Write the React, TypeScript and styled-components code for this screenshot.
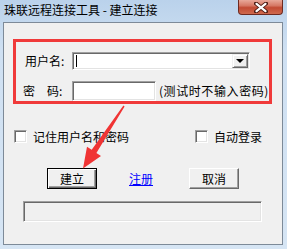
import React from 'react'
import styled, {createGlobalStyle} from 'styled-components'

const GlobalStyle = createGlobalStyle`
  html, body {
    margin: 0;
    padding: 0;
    background: #c8dbef;
  }
  body {
    font-family: 'Noto Sans CJK SC', 'Noto Sans', sans-serif;
    font-size: 12px;
    color: #000;
  }
`

const Window = styled.div`
  position: relative;
  width: 287px;
  height: 249px;
  box-sizing: border-box;
  padding: 0 4px 4px 3px;
  display: flex;
  flex-direction: column;
  background: linear-gradient(180deg, #bad2eb 0%, #cfe0f2 20%, #d6e5f4 100%);
  overflow: hidden;
`

const TitleBar = styled.div`
  height: 22px;
  display: flex;
  align-items: flex-start;
  justify-content: space-between;
`

const TitleText = styled.span`
  margin: 3px 0 0 1px;
  font-size: 12px;
  line-height: 14px;
  white-space: nowrap;
`

const CloseButton = styled.div`
  width: 45px;
  height: 15px;
  box-sizing: border-box;
  border: 1px solid #6e2a20;
  border-top: none;
  border-radius: 0 0 4px 4px;
  background: linear-gradient(180deg, #e8a899 0%, #d67865 40%, #c24a33 55%, #cf6a4e 100%);
  display: flex;
  align-items: center;
  justify-content: center;
`

const Client = styled.div`
  flex: 1;
  background: #f0f0f0;
  border: 1px solid #7d8a98;
  display: flex;
  flex-direction: column;
`

const RedBox = styled.div`
  margin: 16px 0 0 9px;
  width: 259px;
  height: 65px;
  box-sizing: border-box;
  border: 3px solid #f03a3a;
  padding: 10px 0 0 0;
  display: flex;
  flex-direction: column;
  gap: 11px;
`

const FieldRow = styled.div<{$h: number}>`
  display: flex;
  align-items: center;
  height: ${p => p.$h}px;
  padding-left: ${p => (p.$h > 18 ? 7 : 9)}px;
`

const Label = styled.span<{$w: number}>`
  width: ${p => p.$w}px;
  white-space: nowrap;
  line-height: 14px;
`

const Sunken = styled.div<{$w: number; $h: number}>`
  width: ${p => p.$w}px;
  height: ${p => p.$h}px;
  box-sizing: border-box;
  background: #fff;
  border-top: 1px solid #a0a0a0;
  border-left: 1px solid #a0a0a0;
  border-bottom: 1px solid #fff;
  border-right: 1px solid #fff;
  box-shadow: inset 1px 1px 0 #696969, inset -1px -1px 0 #e3e3e3;
  display: flex;
  align-items: center;
  position: relative;
`

const Caret = styled.div`
  width: 1px;
  height: 12px;
  background: #000;
  margin-left: 3px;
`

const DropButton = styled.div`
  position: absolute;
  right: 1px;
  top: 1px;
  bottom: 1px;
  width: 16px;
  box-sizing: border-box;
  background: #f0f0f0;
  border-top: 1px solid #f0f0f0;
  border-left: 1px solid #f0f0f0;
  border-right: 1px solid #696969;
  border-bottom: 1px solid #696969;
  box-shadow: inset 1px 1px 0 #fff, inset -1px -1px 0 #a0a0a0;
  display: flex;
  align-items: center;
  justify-content: center;
`

const Triangle = styled.div`
  width: 0;
  height: 0;
  border-left: 4px solid transparent;
  border-right: 4px solid transparent;
  border-top: 4px solid #000;
`

const Hint = styled.span`
  margin-left: 3px;
  white-space: nowrap;
  line-height: 14px;
  letter-spacing: 0.6px;
`

const CheckRow = styled.div`
  margin-top: 26px;
  padding-left: 10px;
  display: flex;
  align-items: center;
  height: 13px;
`

const CheckItem = styled.label<{$w?: number}>`
  display: flex;
  align-items: center;
  gap: 6px;
  width: ${p => (p.$w ? `${p.$w}px` : 'auto')};
  white-space: nowrap;
  line-height: 14px;
`

const CheckBox = styled.span`
  width: 13px;
  height: 13px;
  box-sizing: border-box;
  background: #fff;
  border-top: 1px solid #a0a0a0;
  border-left: 1px solid #a0a0a0;
  border-bottom: 1px solid #fff;
  border-right: 1px solid #fff;
  box-shadow: inset 1px 1px 0 #696969, inset -1px -1px 0 #e3e3e3;
`

const ButtonRow = styled.div`
  margin-top: 25px;
  padding-left: 43px;
  display: flex;
  align-items: center;
  height: 21px;
`

const PushButton = styled.div<{$default?: boolean}>`
  width: 50px;
  height: 21px;
  box-sizing: border-box;
  background: #f0f0f0;
  border: 1px solid ${p => (p.$default ? '#000' : '#fff')};
  border-right-color: ${p => (p.$default ? '#000' : '#696969')};
  border-bottom-color: ${p => (p.$default ? '#000' : '#696969')};
  box-shadow: ${p =>
    p.$default
      ? 'inset 1px 1px 0 #fff, inset -1px -1px 0 #696969, inset -2px -2px 0 #a0a0a0'
      : 'inset -1px -1px 0 #a0a0a0'};
  display: flex;
  align-items: center;
  justify-content: center;
  line-height: 14px;
`

const LinkText = styled.a`
  margin: 0 36px 0 32px;
  color: #0000ff;
  text-decoration: underline;
  line-height: 14px;
  white-space: nowrap;
`

const StatusBox = styled.div`
  margin: 12px 0 0 19px;
  width: 239px;
  height: 21px;
  box-sizing: border-box;
  border-top: 1px solid #a0a0a0;
  border-left: 1px solid #a0a0a0;
  border-bottom: 1px solid #fff;
  border-right: 1px solid #fff;
  box-shadow: inset 1px 1px 0 #696969, inset -1px -1px 0 #e3e3e3;
`

const Overlay = styled.svg`
  position: absolute;
  left: 0;
  top: 0;
  pointer-events: none;
`

const CloseGlyph = () => (
  <svg width="14" height="11" viewBox="0 0 14 11">
    <path d="M2 1.5 L12 9.5 M12 1.5 L2 9.5" stroke="#4a1a12" strokeWidth="4" strokeLinecap="round"/>
    <path d="M2.5 1.8 L11.5 9.2 M11.5 1.8 L2.5 9.2" stroke="#ffffff" strokeWidth="2.2" strokeLinecap="round"/>
  </svg>
)

const App: React.FC = () => {
  return <Window>
    <GlobalStyle/>
    <TitleBar>
      <TitleText>珠联远程连接工具 - 建立连接</TitleText>
      <CloseButton><CloseGlyph/></CloseButton>
    </TitleBar>
    <Client>
      <RedBox>
        <FieldRow $h={18}>
          <Label $w={47}>用户名:</Label>
          <Sunken $w={178} $h={18}>
            <Caret/>
            <DropButton><Triangle/></DropButton>
          </Sunken>
        </FieldRow>
        <FieldRow $h={20}>
          <Label $w={49}>密　码:</Label>
          <Sunken $w={85} $h={20}/>
          <Hint>(测试时不输入密码)</Hint>
        </FieldRow>
      </RedBox>
      <CheckRow>
        <CheckItem $w={181}><CheckBox/>记住用户名和密码</CheckItem>
        <CheckItem><CheckBox/>自动登录</CheckItem>
      </CheckRow>
      <ButtonRow>
        <PushButton $default>建立</PushButton>
        <LinkText>注册</LinkText>
        <PushButton>取消</PushButton>
      </ButtonRow>
      <StatusBox/>
    </Client>
    <Overlay width="287" height="249" viewBox="0 0 287 249">
      <polygon
        points="123.4,105.6 124.6,106.4 96.4,152.9 101,156 83,168.5 87,146.7 91.7,149.7"
        fill="#f03434"
      />
    </Overlay>
  </Window>
}

export default App
